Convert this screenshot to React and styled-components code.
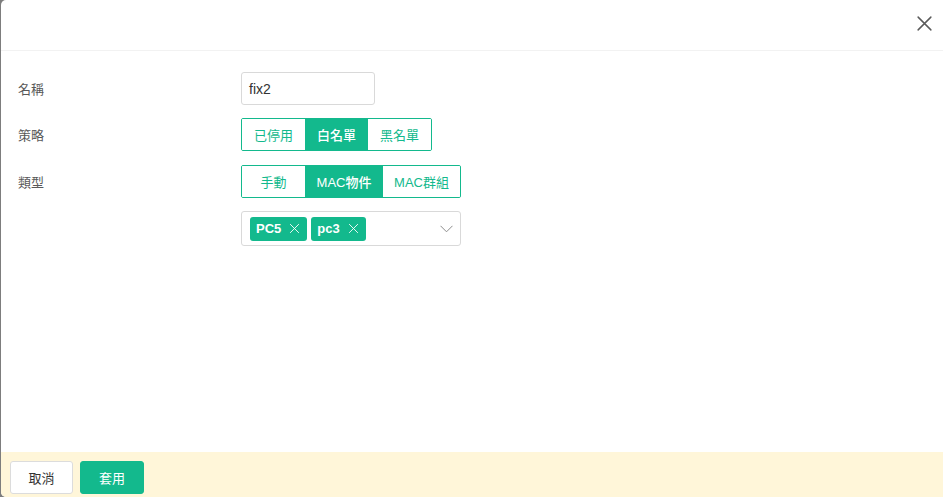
import React from "react";
import styled, { createGlobalStyle } from "styled-components";

const GREEN = "#13b98d";

const Global = createGlobalStyle`
  html, body { margin: 0; padding: 0; height: 100%; }
  body {
    background: #7d7d7d;
    font-family: "Liberation Sans", "Noto Sans CJK TC", sans-serif;
    overflow: hidden;
  }
  #root { height: 100%; }
`;

const Dialog = styled.div`
  margin-left: 1px;
  height: 497px;
  background: #fff;
  border-top-left-radius: 5px;
  border-bottom-left-radius: 5px;
  display: flex;
  flex-direction: column;
  overflow: hidden;
`;

const Header = styled.div`
  height: 50px;
  flex: none;
  border-bottom: 1px solid #f2f2f2;
  display: flex;
  justify-content: flex-end;
  align-items: center;
  padding-right: 7px;
`;

const CloseBtn = styled.button`
  width: 24px;
  height: 24px;
  border: none;
  background: none;
  padding: 0;
  display: flex;
  align-items: center;
  justify-content: center;
  cursor: pointer;
  margin-top: -3px;
`;

const Body = styled.div`
  flex: 1;
  padding: 21px 0 0 17px;
  display: flex;
  flex-direction: column;
  gap: 13px;
`;

const Row = styled.div`
  display: grid;
  grid-template-columns: 223px auto;
  align-items: center;
  margin-top: ${(p) => p.mt || 0}px;
`;

const Label = styled.div`
  font-size: 13px;
  color: #595959;
  font-family: "Noto Sans CJK TC", sans-serif;
`;

const Input = styled.div`
  width: 134px;
  height: 33px;
  box-sizing: border-box;
  border: 1px solid #d9d9d9;
  border-radius: 3px;
  display: flex;
  align-items: center;
  padding-left: 7px;
  font-size: 14px;
  color: #333;
`;

const Segmented = styled.div`
  display: inline-flex;
  border: 1px solid ${GREEN};
  border-radius: 2px;
  height: 31px;
  overflow: hidden;
  justify-self: start;
`;

const Seg = styled.div`
  width: ${(p) => p.w}px;
  display: flex;
  align-items: center;
  justify-content: center;
  font-size: 13px;
  font-family: "Liberation Sans", "Noto Sans CJK TC", sans-serif;
  font-weight: ${(p) => (p.active ? 500 : 400)};
  background: ${(p) => (p.active ? GREEN : "#fff")};
  color: ${(p) => (p.active ? "#fff" : GREEN)};
`;

const Select = styled.div`
  width: 220px;
  height: 35px;
  box-sizing: border-box;
  border: 1px solid #d9d9d9;
  border-radius: 3px;
  display: flex;
  align-items: center;
  padding-left: 8px;
  gap: 4px;
  position: relative;
`;

const Tag = styled.div`
  height: 24px;
  background: ${GREEN};
  border-radius: 3px;
  color: #fff;
  font-weight: 700;
  font-size: 13px;
  display: flex;
  align-items: center;
  gap: 8px;
  padding: 0 7px 0 6px;
`;

const Chevron = styled.div`
  position: absolute;
  right: 7px;
  top: 13px;
  display: flex;
`;

const Footer = styled.div`
  height: 45px;
  flex: none;
  background: #fff6d9;
  display: flex;
  align-items: flex-start;
  padding: 9px 0 0 9px;
  gap: 7px;
  box-sizing: border-box;
`;

const Button = styled.button`
  width: ${(p) => (p.primary ? 64 : 63)}px;
  height: 33px;
  border-radius: 3px;
  font-size: 13px;
  font-family: "Noto Sans CJK TC", sans-serif;
  border: 1px solid ${(p) => (p.primary ? GREEN : "#dcdcdc")};
  background: ${(p) => (p.primary ? GREEN : "#fff")};
  color: ${(p) => (p.primary ? "#fff" : "#333")};
  padding: 0;
`;

const X = ({ size, color, w }) => (
  <svg width={size} height={size} viewBox="0 0 16 16" fill="none" stroke={color} strokeWidth={w} strokeLinecap="round">
    <path d="M2 2 L14 14 M14 2 L2 14" />
  </svg>
);

export default function App() {
  return (
    <>
      <Global />
      <Dialog>
        <Header>
          <CloseBtn>
            <X size={17} color="#5a5a5a" w={1.4} />
          </CloseBtn>
        </Header>
        <Body>
          <Row>
            <Label>名稱</Label>
            <Input>fix2</Input>
          </Row>
          <Row>
            <Label>策略</Label>
            <Segmented>
              <Seg w={63}>已停用</Seg>
              <Seg w={63} active>白名單</Seg>
              <Seg w={63}>黑名單</Seg>
            </Segmented>
          </Row>
          <Row mt={1}>
            <Label>類型</Label>
            <Segmented>
              <Seg w={63}>手動</Seg>
              <Seg w={78} active>MAC物件</Seg>
              <Seg w={77}>MAC群組</Seg>
            </Segmented>
          </Row>
          <Row>
            <Label></Label>
            <Select>
              <Tag>
                PC5 <X size={11} color="#fff" w={1.3} />
              </Tag>
              <Tag>
                pc3 <X size={11} color="#fff" w={1.3} />
              </Tag>
              <Chevron>
                <svg width="13" height="8" viewBox="0 0 13 8" fill="none" stroke="#8c8c8c" strokeWidth="1">
                  <path d="M0.5 0.8 L6.5 6.8 L12.5 0.8" />
                </svg>
              </Chevron>
            </Select>
          </Row>
        </Body>
        <Footer>
          <Button>取消</Button>
          <Button primary>套用</Button>
        </Footer>
      </Dialog>
    </>
  );
}
